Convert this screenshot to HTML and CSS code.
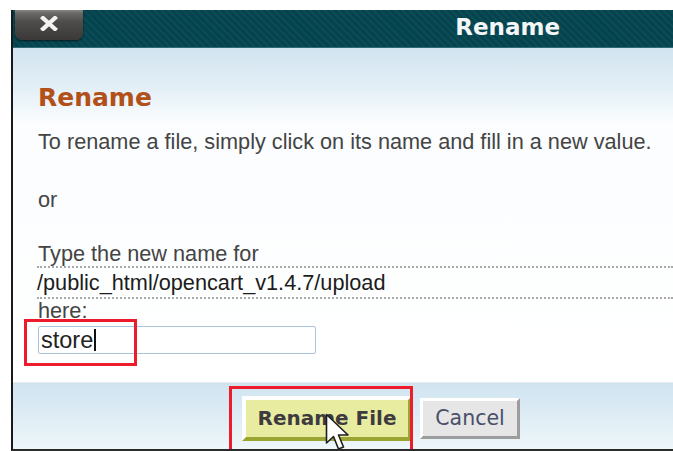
FILE: index.html
```html
<!DOCTYPE html>
<html>
<head>
<meta charset="utf-8">
<link rel="stylesheet" href="styles.css">
</head>
<body>
<div class="dialog">
  <div class="header">
    <div class="close">
      <svg width="18" height="15" viewBox="0 0 18 15">
        <path d="M3 2 L15 13 M15 2 L3 13" stroke="#f2f2f2" stroke-width="4.2" stroke-linecap="square"/>
      </svg>
    </div>
    <div class="title">Rename</div>
  </div>
  <div class="content">
    <h2 class="heading">Rename</h2>
    <p class="line">To rename a file, simply click on its name and fill in a new value.</p>
    <p class="line or">or</p>
    <div class="form">
      <div class="label">Type the new name for</div>
      <div class="path">/public_html/opencart_v1.4.7/upload</div>
      <div class="label here">here:</div>
      <div class="field">
        <div class="input"><span>store</span><span class="caret"></span></div>
        <span class="mark mark-input"></span>
      </div>
    </div>
  </div>
  <div class="footer">
    <div class="btn-wrap">
      <button class="btn primary">Rename File</button>
      <span class="mark mark-btn"></span>
      <svg class="pointer" width="26" height="40" viewBox="0 0 26 40">
        <path d="M1.5 1.5 L1.5 30 L8.5 23.5 L13.5 36 L18.5 34 L13.5 22 L23 22 Z" fill="#fff" stroke="#1e1e1e" stroke-width="1.6" stroke-linejoin="round"/>
      </svg>
    </div>
    <button class="btn secondary">Cancel</button>
  </div>
</div>
</body>
</html>
```
FILE: styles.css
```css
html, body {
  margin: 0;
  padding: 0;
  background: #fff;
}

.dialog {
  margin: 10px 0 0 11px;
  border-left: 2px solid #1a1a1a;
  border-bottom: 2px solid #2a2a2a;
  height: 439px;
  display: flex;
  flex-direction: column;
  overflow: hidden;
  font-family: "Liberation Sans", Arial, sans-serif;
}

.header {
  height: 37px;
  flex: none;
  display: flex;
  align-items: flex-start;
  background-color: #04444f;
  background-image: repeating-linear-gradient(45deg, rgba(255,255,255,0.035) 0 2px, rgba(0,0,0,0) 2px 5px);
  border-bottom: 1px solid #2f6b75;
}

.close {
  width: 68px;
  height: 30px;
  margin-left: 2px;
  border-radius: 0 0 7px 7px;
  background: linear-gradient(#8a8886 0, #6b6967 3px, #4e4c4b 12px, #3b3938 100%);
  box-shadow: 0 1px 2px rgba(0,0,0,0.6);
  display: flex;
  align-items: center;
  justify-content: center;
}

.close svg {
  margin-top: -3px;
}

.title {
  margin-left: auto;
  margin-right: 113px;
  margin-top: 2px;
  color: #f4f7f7;
  font-family: "DejaVu Sans", Verdana, sans-serif;
  font-weight: bold;
  font-size: 23px;
  line-height: 30px;
}

.content {
  flex: 1;
  padding: 0 0 0 25px;
  background: linear-gradient(#d1e4f0 0, #e3eff6 40px, #fbfdfe 75px, #fff 100%);
}

.heading {
  margin: 35px 0 0;
  color: #b2501a;
  font-family: "DejaVu Sans", Verdana, sans-serif;
  font-weight: bold;
  font-size: 25px;
  line-height: 30px;
}

.line {
  margin: 16px 0 0;
  color: #444;
  font-size: 21.7px;
  line-height: 26px;
}

.line.or {
  margin-top: 32px;
}

.form {
  margin-top: 29px;
  color: #444;
  font-size: 21.7px;
}

.label {
  line-height: 24px;
}

.path {
  margin-left: -1px;
  border-top: 2px dotted #a8a8a8;
  border-bottom: 2px dotted #a8a8a8;
  line-height: 29px;
  color: #1c1c1c;
}

.here {
  height: 27px;
}

.field {
  position: relative;
  width: 278px;
}

.input {
  box-sizing: border-box;
  width: 278px;
  height: 28px;
  padding: 0 2px;
  border: 1px solid #a9c4da;
  border-radius: 2px;
  display: flex;
  align-items: center;
  font-size: 23.5px;
  color: #222;
  background: #fff;
}

.caret {
  width: 2px;
  height: 22px;
  margin-left: 1px;
  background: #111;
}

.mark {
  position: absolute;
  border: 3px solid #ee1b2c;
  pointer-events: none;
}

.mark-input {
  left: -14px;
  top: -7px;
  width: 107px;
  height: 41px;
}

.footer {
  height: 67px;
  flex: none;
  display: flex;
  align-items: center;
  padding: 4px 0 0 216px;
  box-sizing: border-box;
  gap: 8px;
  background: linear-gradient(#d0e4f0 0, #dfedf5 35px, #eef6f9 100%);
  border-top: 1px solid #e3edf3;
}

.btn-wrap {
  position: relative;
  display: flex;
  align-items: center;
}

.btn {
  margin: 0;
  font-family: "DejaVu Sans", Verdana, sans-serif;
  cursor: default;
  box-sizing: border-box;
  padding: 0;
}

.primary {
  margin-left: 13px;
  width: 170px;
  height: 45px;
  font-size: 20px;
  font-weight: bold;
  color: #3d3b3e;
  background: #e8eca0;
  border-top: 4px solid #fff;
  border-left: 4px solid #fff;
  border-right: 4px solid #9ba531;
  border-bottom: 4px solid #9ba531;
}

.secondary {
  width: 100px;
  height: 41px;
  font-size: 20.5px;
  color: #4a4f6a;
  background: #e6e6e6;
  border-top: 3px solid #fff;
  border-left: 3px solid #fff;
  border-right: 3px solid #9d9d9d;
  border-bottom: 3px solid #9d9d9d;
}

.mark-btn {
  left: 0;
  top: -10px;
  width: 178px;
  height: 60px;
}

.pointer {
  position: absolute;
  left: 96px;
  top: 17px;
}
```
